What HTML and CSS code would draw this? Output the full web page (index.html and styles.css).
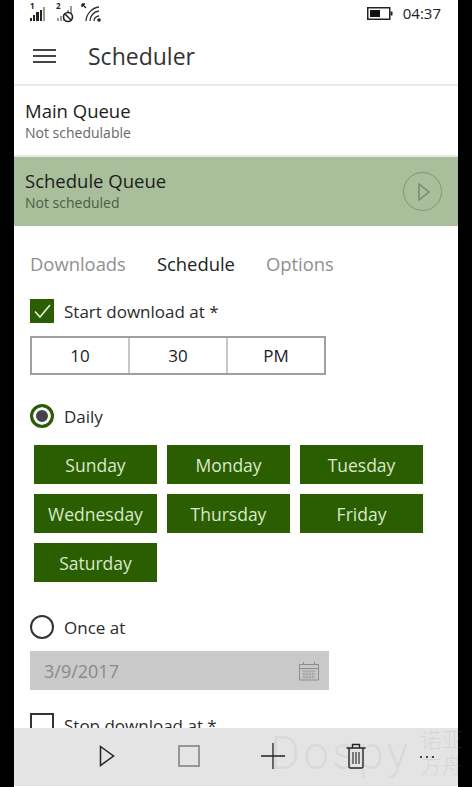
FILE: index.html
```html
<!DOCTYPE html>
<html lang="en">
<head>
  <meta charset="UTF-8">
  <title>Scheduler</title>
  <link rel="stylesheet" href="styles.css">
</head>
<body>
  <div class="phone">
    <div class="status">
      <div class="status-left">
        <svg width="80" height="22" viewBox="0 0 80 22">
          <g fill="#222">
            <text x="2" y="8" class="sim">1</text>
            <rect x="2" y="17" width="2" height="3"/><rect x="5" y="14" width="2" height="6"/><rect x="8" y="11" width="3" height="9"/><rect x="12" y="9" width="2" height="11"/>
            <rect x="15" y="6" width="2" height="14" fill="#999"/>
            <text x="28" y="8" class="sim">2</text>
            <rect x="29" y="17" width="2" height="3" fill="#999"/><rect x="32" y="15" width="2" height="5" fill="#999"/><rect x="35" y="13" width="2" height="7" fill="#999"/><rect x="39" y="9" width="2" height="11" fill="#999"/>
            <rect x="42" y="5" width="2" height="15" fill="#999"/>
          </g>
          <circle cx="40" cy="16" r="4.5" fill="#fff" stroke="#222" stroke-width="1.6"/>
          <path d="M37 13l6 6" stroke="#222" stroke-width="1.5"/>
          <path d="M54 3l4 4M54 3h3M54 3v3" stroke="#222" stroke-width="1.4" fill="none"/>
          <g fill="none" stroke="#333" stroke-width="1.3">
            <path d="M58 20a15 15 0 0 1 13-14"/>
            <path d="M62 20a10 10 0 0 1 9-10"/>
            <path d="M66 20a5 5 0 0 1 5-5"/>
          </g>
          <circle cx="71" cy="19" r="1.8" fill="#222"/>
        </svg>
      </div>
      <div class="status-right">
        <svg width="26" height="13" viewBox="0 0 26 13">
          <rect x="0.75" y="0.75" width="22" height="11.5" fill="none" stroke="#222" stroke-width="1.5"/>
          <rect x="3" y="3" width="10" height="7" fill="#111"/>
          <rect x="23.5" y="4.5" width="2" height="4" fill="#222"/>
        </svg>
        <span class="clock">04:37</span>
      </div>
    </div>

    <header class="titlebar">
      <div class="burger"><i></i><i></i><i></i></div>
      <h1>Scheduler</h1>
    </header>

    <div class="queue">
      <div class="queue-name">Main Queue</div>
      <div class="queue-state">Not schedulable</div>
    </div>
    <div class="queue queue-on">
      <div>
        <div class="queue-name">Schedule Queue</div>
        <div class="queue-state">Not scheduled</div>
      </div>
      <div class="round-play">
        <svg width="12" height="18" viewBox="0 0 12 18"><path d="M1 1l10 8-10 8z" fill="none" stroke="#6f8768" stroke-width="1.3"/></svg>
      </div>
    </div>

    <nav class="tabs">
      <span>Downloads</span>
      <span class="active">Schedule</span>
      <span>Options</span>
    </nav>

    <main class="content">
      <div class="line">
        <span class="check on">
          <svg width="24" height="24" viewBox="0 0 24 24"><path d="M5 12.5l5 5.5 10-12" fill="none" stroke="#e6efdf" stroke-width="1.6"/></svg>
        </span>
        <span>Start download at *</span>
      </div>
      <div class="time">
        <div>10</div>
        <div>30</div>
        <div>PM</div>
      </div>

      <div class="line daily">
        <span class="radio on"></span>
        <span>Daily</span>
      </div>
      <div class="days">
        <div>Sunday</div>
        <div>Monday</div>
        <div>Tuesday</div>
        <div>Wednesday</div>
        <div>Thursday</div>
        <div>Friday</div>
        <div>Saturday</div>
      </div>

      <div class="line once">
        <span class="radio"></span>
        <span>Once at</span>
      </div>
      <div class="date">
        <span>3/9/2017</span>
        <svg width="20" height="20" viewBox="0 0 20 20">
          <path d="M0.5 3.5h19v15.5h-19zM0.5 7.5h19M4.5 1v3M15.5 1v3" fill="none" stroke="#8c8c8c"/>
          <path d="M3 10h14M3 13h14M3 16h14M5 9v9M8 9v9M11 9v9M14 9v9" fill="none" stroke="#a0a0a0" stroke-width="0.8"/>
        </svg>
      </div>

      <div class="line stop">
        <span class="check"></span>
        <span>Stop download at *</span>
      </div>
    </main>

    <footer class="appbar">
      <svg width="16" height="22" viewBox="0 0 16 22" class="ab-play"><path d="M1.5 1.5l13 9.5-13 9.5z" fill="none" stroke="#222" stroke-width="1.5"/></svg>
      <svg width="22" height="22" viewBox="0 0 22 22" class="ab-stop"><rect x="1" y="1" width="20" height="20" fill="none" stroke="#8e8e8e" stroke-width="1.8"/></svg>
      <svg width="24" height="26" viewBox="0 0 24 26" class="ab-add"><path d="M0 13h24M12 0v26" stroke="#222" stroke-width="1.3"/></svg>
      <svg width="20" height="26" viewBox="0 0 20 26" class="ab-trash">
        <path d="M0.5 5h19M6.5 5V1.5h7V5M3 5v19a1.5 1.5 0 0 0 1.5 1h11a1.5 1.5 0 0 0 1.5-1V5" fill="none" stroke="#222" stroke-width="1.4"/>
        <path d="M7 9v12M10 9v12M13 9v12" stroke="#222" stroke-width="1.1"/>
      </svg>
      <span class="ab-more"><i></i><i></i><i></i></span>
    </footer>
  </div>

  <div class="mark">
    <span class="mark-latin">Dospy</span>
    <span class="mark-cn">诺亚<br>方舟</span>
  </div>
</body>
</html>
```

FILE: styles.css
```css
* { box-sizing: border-box; }
html, body { height: 787px; }
body { margin: 0; background: #000; color: #222; font-family: "Open Sans", "Noto Sans", Arial, sans-serif; overflow: hidden; position: relative; }

.phone { margin: 0 14px; height: 787px; background: #fff; display: flex; flex-direction: column; overflow: hidden; }

.status { height: 30px; flex-shrink: 0; display: flex; justify-content: space-between; align-items: flex-start; }
.status-left { padding: 1px 0 0 14px; }
.sim { font-size: 8px; font-weight: 700; }
.status-right { display: flex; align-items: center; gap: 10px; padding: 4px 17px 0 0; }
.clock { font-size: 15px; line-height: 18px; color: #222; }

.titlebar { height: 56px; flex-shrink: 0; display: flex; align-items: center; padding: 0 0 3px 19px; border-bottom: 2px solid #eaeaea; }
.burger { width: 23px; display: flex; flex-direction: column; gap: 4px; margin-right: 32px; }
.burger i { display: block; height: 2px; background: #444; }
.titlebar h1 { margin: 0; font-size: 23px; font-weight: 400; color: #333; }

.queue { height: 71px; flex-shrink: 0; padding: 13px 0 0 11px; border-bottom: 2px solid #eaeaea; }
.queue-name { font-size: 18.5px; line-height: 24px; color: #1c1c1c; }
.queue-state { font-size: 14px; line-height: 19px; color: #666; }
.queue-on { height: 69px; padding-top: 12px; background: #a9bf9b; border-bottom: 0; display: flex; justify-content: space-between; padding-right: 16px; }
.queue-on .queue-state { color: #4c5c45; }
.round-play { width: 39px; height: 39px; margin-top: 3px; border: 1px solid #7f977a; border-radius: 50%; display: flex; align-items: center; justify-content: center; padding-left: 2px; }

.tabs { flex-shrink: 0; display: flex; gap: 31px; padding: 24px 0 0 16px; font-size: 18.4px; line-height: 27px; color: #8f8f8f; }
.tabs .active { color: #222; }

.content { flex: 1; min-height: 0; overflow: hidden; padding: 22px 0 0 16px; font-size: 17px; color: #2b2b2b; }
.line { display: flex; align-items: center; gap: 10px; height: 24px; }
.check { width: 24px; height: 24px; flex-shrink: 0; border: 2px solid #333; }
.check.on { background: #2b5e00; border: 0; }
.check svg { display: block; }
.radio { width: 24px; height: 24px; flex-shrink: 0; border: 2px solid #333; border-radius: 50%; }
.radio.on { border: 3px solid #2b5e00; background: #44444a; box-shadow: inset 0 0 0 3px #fff; }

.time { width: 296px; height: 39px; margin-top: 13px; border: 2px solid #a0a0a0; display: flex; }
.time div { flex: 1; text-align: center; line-height: 35px; color: #222; }
.time div + div { border-left: 2px solid #c8c8c8; }

.daily { margin-top: 29px; }
.days { display: grid; grid-template-columns: repeat(3, 123px); gap: 10px; margin: 17px 0 0 4px; }
.days div { height: 39px; background: #2b5e00; color: #d9e8cb; text-align: center; line-height: 40px; font-size: 17.5px; }

.once { margin-top: 33px; }
.date { width: 299px; height: 39px; margin-top: 12px; background: #c9c9c9; color: #8a8a8a; display: flex; align-items: center; justify-content: space-between; padding: 0 10px 0 14px; font-size: 18px; }
.stop { margin-top: 23px; }

.appbar { height: 58px; flex-shrink: 0; margin-bottom: 1px; background: #e4e4e4; display: flex; align-items: center; padding-bottom: 3px; position: relative; }
.ab-play { margin-left: 85px; }
.ab-stop { margin-left: 63px; }
.ab-add { margin-left: 61px; }
.ab-trash { margin-left: 61px; }
.ab-more { margin-left: 54px; display: flex; gap: 4px; margin-top: 2px; }
.ab-more i { width: 2px; height: 2px; background: #444; display: block; }

.mark { position: absolute; left: 270px; top: 725px; height: 60px; display: flex; gap: 9px; white-space: nowrap; pointer-events: none; color: rgba(120, 120, 120, 0.1); }
.mark-latin { font-family: Roboto, sans-serif; font-weight: 300; font-size: 46px; line-height: 56px; letter-spacing: 3px; }
.mark-cn { font-family: "Noto Sans CJK SC", sans-serif; font-weight: 300; font-size: 21px; line-height: 26px; color: rgba(150, 150, 150, 0.2); }
```
